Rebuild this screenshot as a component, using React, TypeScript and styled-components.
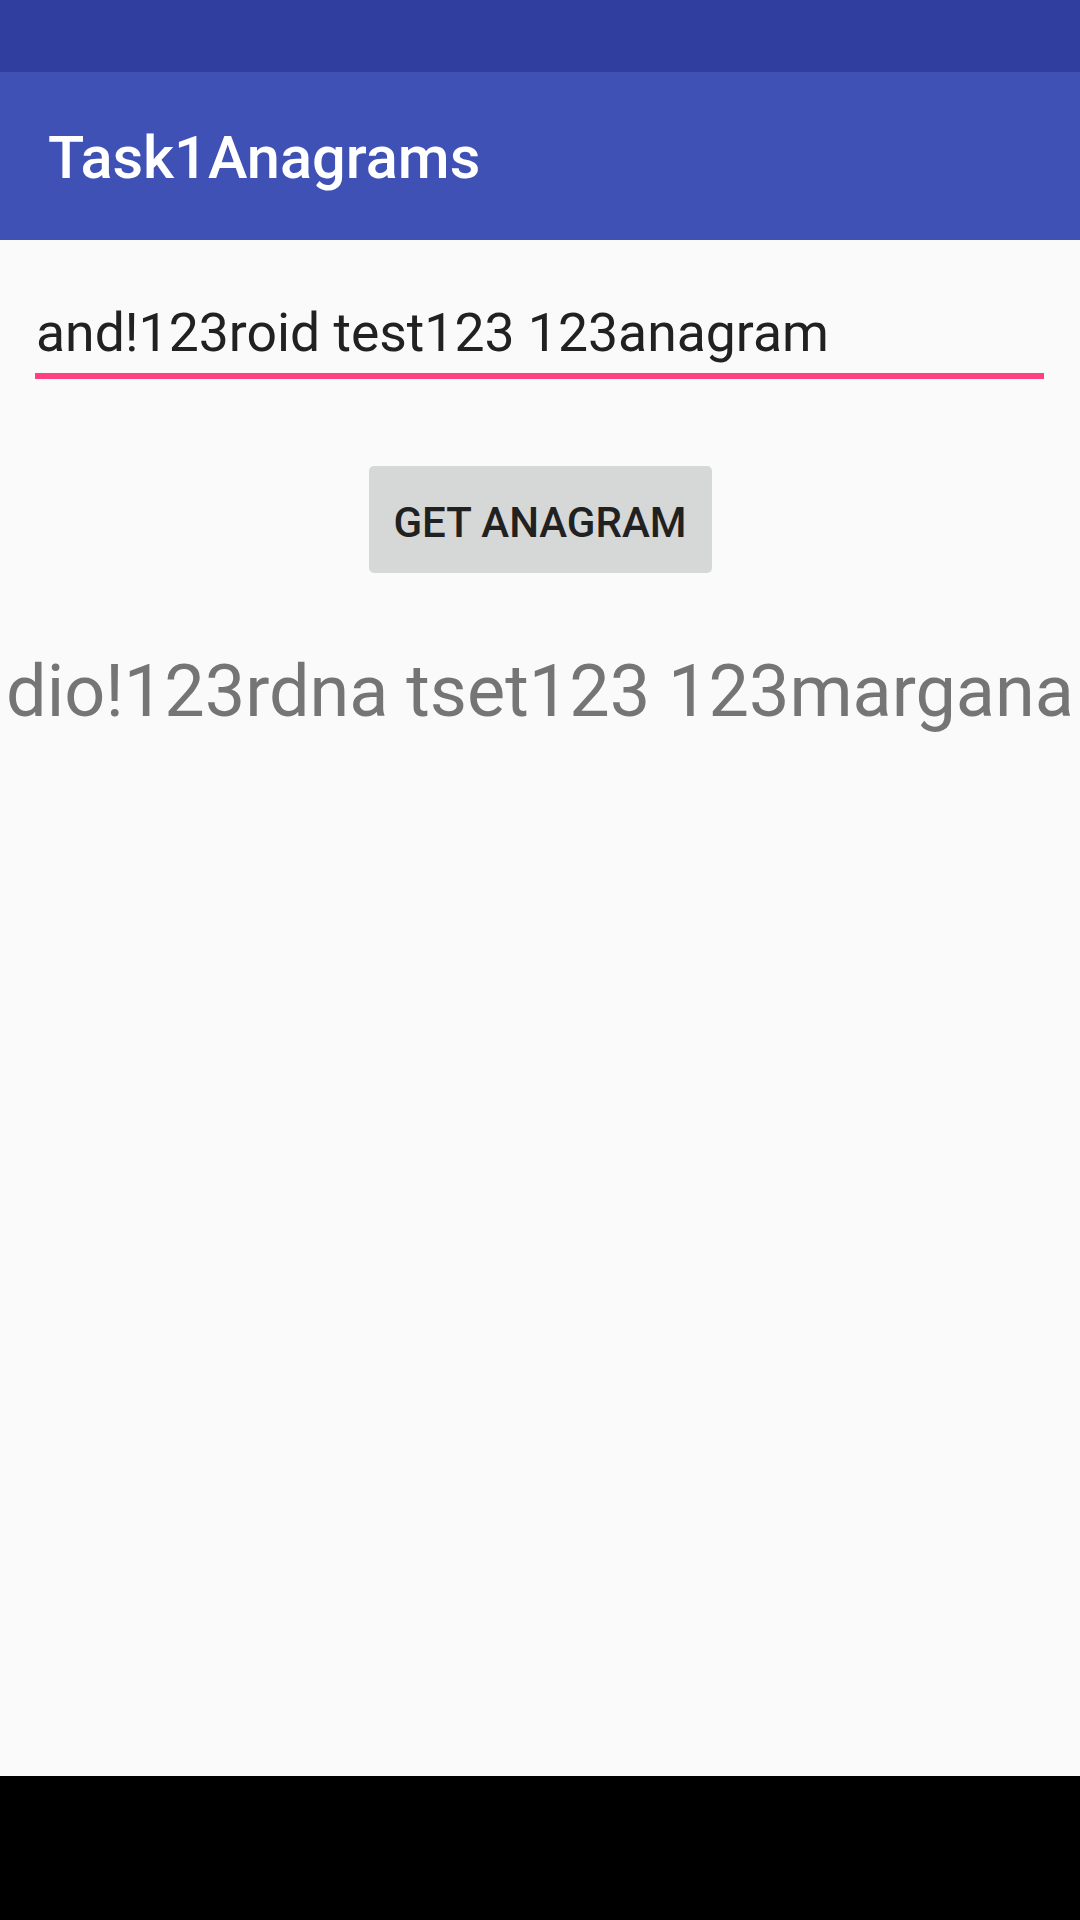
import React from "react";
import styled, { createGlobalStyle } from "styled-components";

const Global = createGlobalStyle`
  html, body { margin: 0; padding: 0; background: #fafafa; }
  body { font-family: Roboto, "Noto Sans", sans-serif; }
  * { box-sizing: border-box; }
`;

const Screen = styled.div`
  width: 1080px;
  height: 1920px;
  display: flex;
  flex-direction: column;
  background: #fafafa;
  overflow: hidden;
`;

const StatusBar = styled.div`
  height: 72px;
  background: #303f9f;
  flex: none;
`;

const AppBar = styled.header`
  height: 168px;
  flex: none;
  background: #3f51b5;
  padding: 4px 0 0 48px;
  display: flex;
  align-items: center;
`;

const Title = styled.h1`
  margin: 0;
  font-family: Roboto, sans-serif;
  font-weight: 500;
  font-size: 59.5px;
  line-height: 80px;
  color: #ffffff;
`;

const Content = styled.main`
  flex: 1;
  display: flex;
  flex-direction: column;
  align-items: center;
`;

const Field = styled.div`
  align-self: stretch;
  margin: 61px 36px 0 35px;
  padding: 0 0 8px 1px;
  border-bottom: 6px solid #ff4081;
  font-size: 53.5px;
  line-height: 64px;
  color: #212121;
  white-space: nowrap;
`;

const Button = styled.button`
  margin-top: 87px;
  width: 343px;
  height: 107px;
  border: none;
  border-radius: 5px;
  background: #d6d7d7;
  color: #212121;
  font-family: Roboto, sans-serif;
  font-weight: 500;
  font-size: 42px;
  line-height: 50px;
  padding: 6px 0 0;
  text-transform: uppercase;
  display: flex;
  align-items: center;
  justify-content: center;
`;

const Result = styled.p`
  margin: 77px 0 0;
  font-size: 72px;
  line-height: 84px;
  color: #757575;
  white-space: nowrap;
`;

const NavBar = styled.div`
  height: 144px;
  flex: none;
  background: #000000;
`;

export default function App() {
  return (
    <>
      <Global />
      <Screen>
        <StatusBar />
        <AppBar>
          <Title>Task1Anagrams</Title>
        </AppBar>
        <Content>
          <Field>and!123roid test123 123anagram</Field>
          <Button>Get anagram</Button>
          <Result>dio!123rdna tset123 123margana</Result>
        </Content>
        <NavBar />
      </Screen>
    </>
  );
}
